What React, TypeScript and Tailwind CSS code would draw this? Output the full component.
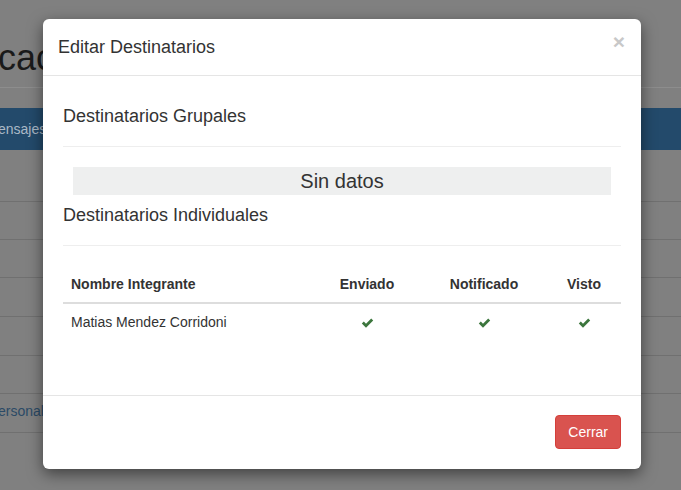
import React from "react";

const font = { fontFamily: '"Liberation Sans", Arial, sans-serif' };

function Check() {
  return (
    <svg width="13" height="11" viewBox="0 0 13 11" className="inline-block">
      <path d="M0.8 5.6 L2.8 3.6 L5 5.8 L10.2 0.6 L12.2 2.6 L5 9.8 Z" fill="#3c763d" />
    </svg>
  );
}

function Backdrop() {
  const rows = [
    { h: "h-[52px]", text: "" },
    { h: "h-[38px]", text: "" },
    { h: "h-[38px]", text: "" },
    { h: "h-[39px]", text: "" },
    { h: "h-[39px]", text: "" },
    { h: "h-[38px]", text: "" },
    { h: "h-[39px]", text: "ersonal" },
  ];
  return (
    <div className="h-[490px] w-[681px] overflow-hidden bg-[#808080]">
      <div className="pt-[38px] pb-[9px]">
        <div className="ml-[-2px] h-[40px] text-[36px] leading-[40px] text-[#1a1a1a]">cac</div>
      </div>
      <div className="h-px bg-[#8d8d8d]" />
      <div className="mt-[20px] flex h-[42px] items-center bg-[#234a6b] text-[14px] text-[#aab8c6]">
        <span className="ml-[-2px]">ensajes</span>
      </div>
      {rows.map((r, i) => (
        <div key={i} className={`${r.h} flex items-end border-b border-[#707070]`}>
          {r.text && <span className="mb-[10px] ml-[-2px] text-[14px] text-[#2b4a66]">{r.text}</span>}
        </div>
      ))}
    </div>
  );
}

export default function App() {
  return (
    <div className="relative h-[490px] w-[681px] overflow-hidden text-[#333]" style={font}>
      <Backdrop />
      <div className="absolute left-[43px] top-[19px] w-[598px] rounded-[6px] bg-white shadow-[0_5px_15px_rgba(0,0,0,0.5)]">
        <div className="flex h-[57px] items-center justify-between border-b border-[#e5e5e5] px-[15px]">
          <h4 className="text-[18px] leading-[26px] text-[#333]">Editar Destinatarios</h4>
          <span className="mt-[-12px] mr-[1px] text-[21px] font-bold leading-none text-[#c8c8c8]">×</span>
        </div>
        <div className="px-[20px] pt-[30px] pb-[55px]">
          <h4 className="text-[18px] leading-[20px]">Destinatarios Grupales</h4>
          <div className="mt-[20px] mb-[20px] h-px bg-[#eee]" />
          <div className="mx-[10px] h-[28px] bg-[#eeefef] text-center text-[20px] leading-[28px]">Sin datos</div>
          <h4 className="mt-[10px] text-[18px] leading-[20px]">Destinatarios Individuales</h4>
          <div className="mt-[20px] mb-[20px] h-px bg-[#eee]" />
          <table className="w-full border-collapse text-[14px]">
            <thead>
              <tr className="border-b-2 border-[#ddd]">
                <th className="w-[250px] p-[8px] text-left font-bold leading-[20px]">Nombre Integrante</th>
                <th className="w-[108px] p-[8px] text-center font-bold leading-[20px]">Enviado</th>
                <th className="w-[126px] p-[8px] text-center font-bold leading-[20px]">Notificado</th>
                <th className="p-[8px] text-center font-bold leading-[20px]">Visto</th>
              </tr>
            </thead>
            <tbody>
              <tr>
                <td className="p-[8px] leading-[20px]">Matias Mendez Corridoni</td>
                <td className="p-[8px] text-center leading-[20px]"><Check /></td>
                <td className="p-[8px] text-center leading-[20px]"><Check /></td>
                <td className="p-[8px] text-center leading-[20px]"><Check /></td>
              </tr>
            </tbody>
          </table>
        </div>
        <div className="flex justify-end border-t border-[#e5e5e5] px-[20px] pt-[19px] pb-[20px]">
          <button className="h-[34px] rounded-[4px] border border-[#d43f3a] bg-[#d9534f] px-[12px] text-[14px] text-white">
            Cerrar
          </button>
        </div>
      </div>
    </div>
  );
}
